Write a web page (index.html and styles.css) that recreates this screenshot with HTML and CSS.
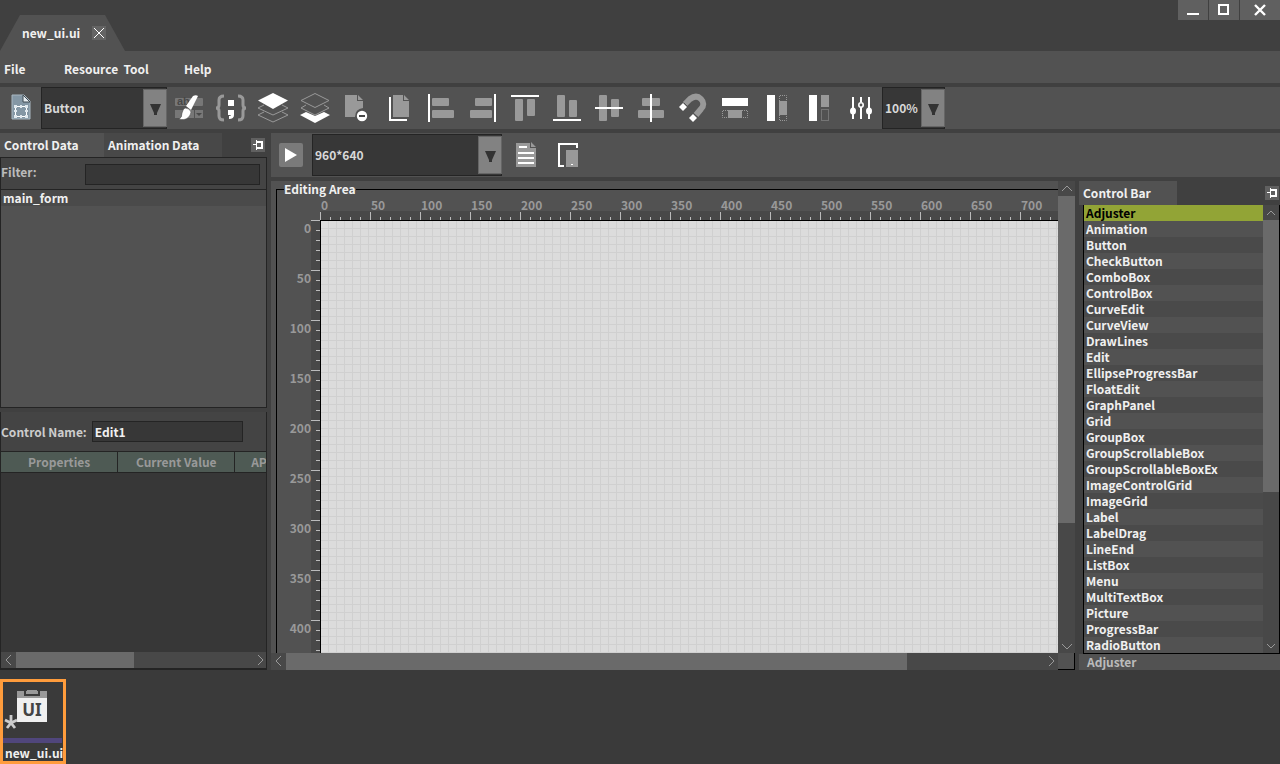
FILE: index.html
```html
<!DOCTYPE html>
<html lang="en">
<head>
<meta charset="utf-8">
<title>new_ui.ui</title>
<link rel="stylesheet" href="styles.css">
</head>
<body>
<div class="app">
<header class="titlebar">
  <div class="doc-tab"><span>new_ui.ui</span>
    <button class="tab-close" aria-label="Close tab"><svg width="14" height="14" viewBox="0 0 14 14"><path d="M2 2l10 10M12 2L2 12" stroke="#fff"/></svg></button>
  </div>
  <div class="window-buttons">
    <button aria-label="Minimize"><svg width="12" height="12" viewBox="0 0 12 12"><path d="M0 10h12" stroke="#fff" stroke-width="2"/></svg></button>
    <button aria-label="Maximize"><svg width="12" height="12" viewBox="0 0 12 12"><path d="M1 1h9v9H1z" fill="none" stroke="#fff" stroke-width="2"/></svg></button>
    <button class="wide" aria-label="Close"><svg width="12" height="12" viewBox="0 0 12 12"><path d="M1 1l10 10M11 1L1 11" stroke="#fff" stroke-width="2.4"/></svg></button>
  </div>
</header>
<nav class="menu"><button>File</button><button>Resource&nbsp; Tool</button><button>Help</button></nav>
<div class="toolbar">
  <button class="tool form-tool" aria-label="Form"><svg width="20" height="28" viewBox="0 0 20 28"><path d="M1 1h12l6 6v18H1z" fill="#8497a5" stroke="#a9b8c2"/><path d="M12 1l7 7h-7z" fill="#e8eef2" stroke="#3f4a52"/><path d="M4.500 12.500h11v10h-11z" fill="none" stroke="#fff"/><path d="M3 11h3v3H3zM14 11h3v3h-3zM3 21h3v3H3zM14 21h3v3h-3zM9 11h2v3H9zM9 21h2v3H9zM3 16h3v2H3zM14 16h3v2h-3z" fill="#dfe8ee"/></svg></button>
  <div class="combo combo-control"><select aria-label="Control type"><option>Button</option></select><span class="arrow"><svg width="11" height="13" viewBox="0 0 11 13"><path d="M0 1h11L7 10v2H4v-2z" fill="#333"/></svg></span></div>
  <button class="tool" aria-label="Style"><svg width="32" height="32" viewBox="0 0 32 32"><rect x="2" y="6" width="28" height="8" rx="1" fill="#777"/><text class="abc" x="4" y="13">ab</text><path d="M2 18h19v8H2zM22 18h8v8h-8z" fill="#777"/><path d="M23 21h6l-3 3z" fill="#484848"/><path d="M20 4q3-1.500 5 0l-7 14-5-4z" fill="#fff"/><path d="M12 16q5 0 6 4c-1 6-6 9-12 7q3-1 3-6 1-4 3-5z" fill="#fff" stroke="#525252" stroke-width=".6"/></svg></button>
  <button class="tool" aria-label="Code"><svg width="32" height="32" viewBox="0 0 32 32"><path d="M9 4Q4 4 4 8v5q0 3-3 3 3 0 3 3v5q0 4 5 4M23 4q5 0 5 4v5q0 3 3 3-3 0-3 3v5q0 4-5 4" fill="none" stroke="#999" stroke-width="3"/><path d="M13 8h6v6h-6zM13 18h6v5q0 4-5 4v-3q2 0 2-1h-3z" fill="#fff"/></svg></button>
  <button class="tool" aria-label="Bring to front"><svg width="32" height="32" viewBox="0 0 32 32"><path d="M7 13l-6 3 15 7 15-7-6-3M7 20l-6 3 15 7 15-7-6-3" fill="none" stroke="#999"/><path d="M16 1l15 7.500L16 17 1 8.500z" fill="#fff"/></svg></button>
  <button class="tool" aria-label="Send to back"><svg width="32" height="32" viewBox="0 0 32 32"><path d="M16 1.500l14 7-14 7-14-7zM7 13l-5 3 14 7 14-7-5-3" fill="none" stroke="#999"/><path d="M7 20l9 4 9-4 6 3-15 8-15-8z" fill="#fff"/></svg></button>
  <button class="tool" aria-label="Remove page"><svg width="32" height="32" viewBox="0 0 32 32"><path d="M4 3h12v6h6v7q-8 1-8 9H4zM17 3l5 5h-5z" fill="#999"/><circle cx="21" cy="24" r="5.200" fill="#fff"/><path d="M18 24h6" stroke="#484848" stroke-width="2"/></svg></button>
  <button class="tool" aria-label="Copy page"><svg width="32" height="32" viewBox="0 0 32 32"><path d="M10 3h10v6h6v16H10zM21 3l5 5h-5z" fill="#999"/><path d="M7 5v23h17" fill="none" stroke="#fff" stroke-width="2"/></svg></button>
  <button class="tool" aria-label="Align left"><svg width="32" height="32" viewBox="0 0 32 32"><rect x="7" y="6" width="17" height="8" rx="1" fill="#999"/><rect x="7" y="18" width="22" height="8" rx="1" fill="#999"/><path d="M4 2v28" stroke="#fff" stroke-width="2"/></svg></button>
  <button class="tool" aria-label="Align right"><svg width="32" height="32" viewBox="0 0 32 32"><rect x="8" y="6" width="17" height="8" rx="1" fill="#999"/><rect x="3" y="18" width="22" height="8" rx="1" fill="#999"/><path d="M28 2v28" stroke="#fff" stroke-width="2"/></svg></button>
  <button class="tool" aria-label="Align top"><svg width="32" height="32" viewBox="0 0 32 32"><rect x="6" y="7" width="8" height="22" rx="1" fill="#999"/><rect x="18" y="7" width="8" height="17" rx="1" fill="#999"/><path d="M2 4h28" stroke="#fff" stroke-width="2"/></svg></button>
  <button class="tool" aria-label="Align bottom"><svg width="32" height="32" viewBox="0 0 32 32"><rect x="6" y="3" width="8" height="22" rx="1" fill="#999"/><rect x="18" y="8" width="8" height="17" rx="1" fill="#999"/><path d="M2 28h28" stroke="#fff" stroke-width="2"/></svg></button>
  <button class="tool" aria-label="Align middle"><svg width="32" height="32" viewBox="0 0 32 32"><rect x="6" y="3" width="8" height="26" rx="1" fill="#999"/><rect x="18" y="7" width="8" height="18" rx="1" fill="#999"/><path d="M2 16h28" stroke="#fff" stroke-width="2"/></svg></button>
  <button class="tool" aria-label="Align center"><svg width="32" height="32" viewBox="0 0 32 32"><rect x="7" y="6" width="18" height="8" rx="1" fill="#999"/><rect x="3" y="18" width="26" height="8" rx="1" fill="#999"/><path d="M16 2v28" stroke="#fff" stroke-width="2"/></svg></button>
  <button class="tool" aria-label="Snap"><svg width="32" height="32" viewBox="0 0 32 32"><path d="M8 12l5-5c4-3 8-3 11 0s3 7 0 10l-5 6" fill="none" stroke="#999" stroke-width="6"/><path d="M7 11l5 5M15 22l6 4" stroke="#525252"/><path d="M2 15l4-4 4 4-4 4zM12 26l4-4 4 4-4 4z" fill="#fff"/></svg></button>
  <button class="tool" aria-label="Same width"><svg width="32" height="32" viewBox="0 0 32 32"><path d="M3 6h26v8H3z" fill="#fff"/><path d="M9 18h14v8H9z" fill="#999"/><path d="M9 18.500H3.500v7H9M23 18.500h5.500v7H23" fill="none" stroke="#999" stroke-dasharray="1 1"/></svg></button>
  <button class="tool" aria-label="Same height"><svg width="32" height="32" viewBox="0 0 32 32"><path d="M6 3h8v26H6z" fill="#fff"/><path d="M18 9h8v14h-8z" fill="#999"/><path d="M18.500 9V3.500h7V9M18.500 23v5.500h7V23" fill="none" stroke="#999" stroke-dasharray="1 1"/></svg></button>
  <button class="tool" aria-label="Same size"><svg width="32" height="32" viewBox="0 0 32 32"><path d="M6 3h8v26H6z" fill="#fff"/><path d="M18 3h8v12h-8z" fill="#999"/><path d="M18.500 17.500h7v11h-7z" fill="none" stroke="#999" stroke-dasharray="1 1"/></svg></button>
  <button class="tool" aria-label="Settings"><svg width="32" height="32" viewBox="0 0 32 32"><path d="M8 5v22M16 5v5M16 15v12M24 5v22" stroke="#fff" stroke-width="2"/><ellipse cx="8" cy="19" rx="3" ry="3.500" fill="#fff"/><circle cx="16" cy="13" r="2.200" fill="none" stroke="#fff" stroke-width="1.600"/><ellipse cx="24" cy="19" rx="3" ry="3.500" fill="#fff"/></svg></button>
  <div class="combo combo-zoom"><select aria-label="Zoom"><option>100%</option></select><span class="arrow"><svg width="11" height="13" viewBox="0 0 11 13"><path d="M0 1h11L7 10v2H4v-2z" fill="#333"/></svg></span></div>
</div>
<main class="main">
  <aside class="left">
    <div class="tabs"><button class="tab active">Control Data</button><button class="tab">Animation Data</button>
      <button class="pin" aria-label="Pin"><svg width="14" height="14" viewBox="0 0 14 14"><path d="M2 6h3v1H2zM5 2h1v10H5zM6 3h6v8H6v-2h4V5H6z" fill="#fff"/></svg></button></div>
    <section class="tree">
      <div class="filter"><label for="filter">Filter:</label><input id="filter"></div>
      <ul class="tree-list"><li>main_form</li></ul>
    </section>
    <section class="props">
      <div class="name-row"><label for="cname">Control Name:</label><input id="cname" value="Edit1"></div>
      <div class="table-clip"><table><thead><tr><th>Properties</th><th>Current Value</th><th class="last">AP</th></tr></thead></table></div>
      <div class="hscroll"><svg width="15" height="16" viewBox="0 0 15 16"><path d="M10 3L5 8l5 5" /></svg><div class="track"><div class="thumb left-thumb"></div></div><svg width="15" height="16" viewBox="0 0 15 16"><path d="M7 3l5 5-5 5"/></svg></div>
    </section>
  </aside>
  <div class="work">
    <div class="runbar">
      <button class="play" aria-label="Run"><svg width="24" height="24" viewBox="0 0 24 24"><path d="M6 5l12 7-12 7z" fill="#fff"/></svg></button>
      <div class="combo combo-size"><select aria-label="Resolution"><option>960*640</option></select><span class="arrow"><svg width="11" height="13" viewBox="0 0 11 13"><path d="M0 1h11L7 10v2H4v-2z" fill="#333"/></svg></span></div>
      <button class="tool" aria-label="Document"><svg width="32" height="32" viewBox="0 0 32 32"><path d="M6 4h14v5h6v19H6zM21 3l5 5h-5z" fill="#999"/><path d="M9 8h8M8 14h16M8 19h16M8 24h16" stroke="#fff" stroke-width="2"/></svg></button>
      <button class="tool" aria-label="Orientation"><svg width="32" height="32" viewBox="0 0 32 32"><path d="M12 27H7V5h18v4" fill="none" stroke="#fff" stroke-width="2"/><path d="M14 11h12v17H14z" fill="#999"/><path d="M19 25.500h2" stroke="#fff"/></svg></button>
    </div>
    <div class="panes">
      <section class="editor">
        <fieldset class="frame"><legend>Editing Area</legend>
          <div class="ruler-x"><span>0</span><span>50</span><span>100</span><span>150</span><span>200</span><span>250</span><span>300</span><span>350</span><span>400</span><span>450</span><span>500</span><span>550</span><span>600</span><span>650</span><span>700</span></div>
          <div class="ruler-y"><span>0</span><span>50</span><span>100</span><span>150</span><span>200</span><span>250</span><span>300</span><span>350</span><span>400</span></div>
          <div class="canvas"></div>
        </fieldset>
        <div class="vscroll"><svg width="17" height="15" viewBox="0 0 17 15"><path d="M4 10l5-5 5 5"/></svg><div class="track"><div class="thumb editor-v"></div></div><svg width="17" height="15" viewBox="0 0 17 15"><path d="M4 6l5 5 5-5"/></svg></div>
        <div class="hscroll"><svg width="15" height="16" viewBox="0 0 15 16"><path d="M10 3L5 8l5 5" /></svg><div class="track"><div class="thumb editor-h"></div></div><svg width="15" height="16" viewBox="0 0 15 16"><path d="M6 3l5 5-5 5"/></svg></div>
        <div class="corner"></div>
      </section>
      <aside class="right">
        <div class="tabs"><button class="tab active">Control Bar</button>
          <button class="pin" aria-label="Pin"><svg width="14" height="14" viewBox="0 0 14 14"><path d="M2 6h3v1H2zM5 2h1v10H5zM6 3h6v8H6v-2h4V5H6z" fill="#fff"/></svg></button></div>
        <div class="list-box">
          <ul class="controls"><li class="selected">Adjuster</li><li>Animation</li><li>Button</li><li>CheckButton</li><li>ComboBox</li><li>ControlBox</li><li>CurveEdit</li><li>CurveView</li><li>DrawLines</li><li>Edit</li><li>EllipseProgressBar</li><li>FloatEdit</li><li>GraphPanel</li><li>Grid</li><li>GroupBox</li><li>GroupScrollableBox</li><li>GroupScrollableBoxEx</li><li>ImageControlGrid</li><li>ImageGrid</li><li>Label</li><li>LabelDrag</li><li>LineEnd</li><li>ListBox</li><li>Menu</li><li>MultiTextBox</li><li>Picture</li><li>ProgressBar</li><li>RadioButton</li></ul>
          <div class="vscroll"><svg width="16" height="15" viewBox="0 0 16 15"><path d="M4 10l4-4 4 4"/></svg><div class="track"><div class="thumb list-v"></div></div><svg width="16" height="15" viewBox="0 0 16 15"><path d="M4 6l4 4 4-4"/></svg></div>
        </div>
        <div class="status">Adjuster</div>
      </aside>
    </div>
  </div>
</main>
<footer class="files">
  <button class="file"><svg width="58" height="56" viewBox="0 0 58 56"><path d="M14 9h30v9H14z" fill="#999"/><path d="M14 16h30v24H14z" fill="#f0f0f0"/><path d="M21 9h2v3h12V9h2v5H21z" fill="#3a3a3a"/><path d="M24 8h10v3H24z" fill="#999"/><text class="ui-mark" x="29" y="34">UI</text><path d="M8 33v8M2 38l6 3 6-3M4 46l4-5 4 5" fill="none" stroke="#ccc" stroke-width="2.800"/></svg><span class="bar"></span><span class="fname">new_ui.ui</span></button>
</footer>
</div>
</body>
</html>
```
FILE: styles.css
```css
* { box-sizing: border-box; }
body, ul, fieldset { margin: 0; padding: 0; }
body { background: #404040; }
body, button, input, select { font: 700 12px/16px "Noto Sans CJK SC", "Noto Sans", sans-serif; color: #f0f0f0; }
button { border: 0; padding: 0; background: none; }
svg { display: block; flex: none; }
ul { list-style: none; }
input, select { background: #373737; border: 1px solid #242424; border-radius: 0; color: #d8d8d8; outline: 0; }
.app { display: flex; flex-direction: column; height: 100vh; overflow: hidden; }

.titlebar { display: flex; justify-content: space-between; align-items: flex-end; height: 51px; flex: none; }
.doc-tab { display: flex; align-items: center; gap: 12px; height: 36px; width: 125px; padding-left: 22px; background: #525252; clip-path: polygon(20px 0, 105px 0, 100% 100%, 0 100%); }
.tab-close { background: #646464; }
.window-buttons { display: flex; gap: 1px; align-self: flex-start; }
.window-buttons button { display: grid; place-items: center; width: 30px; height: 20px; background: #606060; }
.window-buttons .wide { width: 40px; }

.menu { display: flex; align-items: center; height: 32px; padding: 4px 0 0 4px; background: #525252; flex: none; }
.menu button { min-width: 60px; text-align: left; }
.menu button:nth-child(2) { min-width: 120px; }

.toolbar { display: flex; align-items: center; height: 42px; margin: 4px 0; background: #525252; flex: none; }
.tool { display: grid; place-items: center; width: 42px; height: 42px; flex: none; }
.form-tool { width: 41px; }
.abc { font: 700 11px "Liberation Sans", sans-serif; fill: #484848; }
.combo { position: relative; flex: none; height: 42px; }
.combo select { appearance: none; width: 100%; height: 100%; padding: 0 24px 0 2px; }
.arrow { position: absolute; top: 2px; right: 0; bottom: 2px; width: 24px; display: grid; place-items: center; padding-top: 2px; background: #828282; border: 1px solid #666; pointer-events: none; }
.combo-control { width: 126px; margin-right: 1px; }
.combo-zoom { width: 63px; }

.main { display: flex; gap: 4px; flex: 1; min-height: 0; }
.left { display: flex; flex-direction: column; width: 267px; flex: none; }
.tabs { display: flex; height: 24px; flex: none; align-items: center; }
.tab { height: 24px; width: 118px; padding-left: 4px; text-align: left; background: #484848; }
.tab.active { width: 104px; background: #525252; }
.pin { margin-left: auto; background: #606060; }
.left .pin { margin-right: 2px; }
.right .pin { margin-right: 1px; }
.tree { display: flex; flex-direction: column; flex: none; height: 251px; border: 1px solid #242424; background: #525252; }
.filter { display: flex; justify-content: space-between; height: 32px; padding: 6px 6px 0 0; background: #444; border-bottom: 1px solid #242424; color: #bbb; }
.filter input { width: 175px; height: 21px; }
.tree-list li { height: 16px; padding-left: 2px; background: #4a4a4a; }
.props { display: flex; flex-direction: column; flex: 1; min-height: 0; margin-top: 4px; border: 1px solid #242424; border-top: 0; border-bottom-width: 2px; background: #373737; }
.name-row { display: flex; align-items: center; gap: 5px; height: 39px; background: #444; color: #ccc; }
.name-row input { width: 151px; height: 21px; padding: 0 2px; color: #f0f0f0; }
.table-clip { flex: 1; overflow: hidden; }
table { width: 351px; table-layout: fixed; border-collapse: collapse; }
th { height: 21px; padding: 0; border: 1px solid #242424; border-left: 0; background: #4e5a54; color: #999; }
.last { text-align: left; padding-left: 16px; }

.hscroll, .vscroll { display: flex; background: #484848; fill: none; stroke: #999; }
.vscroll { flex-direction: column; }
.track { flex: 1; }
.thumb { background: #6a6a6a; height: 100%; }
.left-thumb { width: 50%; }

.work { display: flex; flex-direction: column; flex: 1; min-width: 0; }
.runbar { display: flex; align-items: center; height: 44px; background: #525252; flex: none; }
.play { margin: 0 9px 0 8px; background: #7a7a7a; border-radius: 2px; }
.combo-size { width: 190px; margin-right: 3px; }
.panes { display: flex; gap: 4px; flex: 1; min-height: 0; margin-top: 4px; }
.editor { flex: 1; min-width: 0; display: grid; grid-template: minmax(0, 1fr) 17px / minmax(0, 1fr) 17px; background: #525252; }
.frame { display: grid; grid-template: 23px minmax(0, 1fr) / 43px minmax(0, 1fr); min-width: 0; margin-left: 5px; border: solid #000; border-width: 1px 0 0 1px; overflow: hidden; }
legend { padding: 0; margin-left: 7px; height: 16px; }
.ruler-x { grid-column: 2; display: flex; overflow: hidden; color: #999; background: repeating-linear-gradient(90deg, #bbb 0 1px, transparent 1px 50px) 0 100% / 100% 8px no-repeat, repeating-linear-gradient(90deg, #bbb 0 1px, transparent 1px 10px) 0 100% / 100% 3px no-repeat, linear-gradient(#484848, #484848) 0 100% / 100% 9px no-repeat; }
.ruler-x span { width: 50px; flex: none; padding-left: 1px; }
.ruler-y { overflow: hidden; color: #999; text-align: right; background: repeating-linear-gradient(#bbb 0 1px, transparent 1px 50px) 100% 0 / 9px 100% no-repeat, repeating-linear-gradient(#bbb 0 1px, transparent 1px 10px) 100% 0 / 4px 100% no-repeat, linear-gradient(#484848, #484848) 100% 0 / 9px 100% no-repeat; }
.ruler-y span { display: block; height: 50px; padding-right: 9px; }
.canvas { border: solid #000; border-width: 1px 0 0 1px; background: repeating-linear-gradient(90deg, transparent 0 7px, #d0d0d0 7px 8px), repeating-linear-gradient(#dcdcdc 0 7px, #d0d0d0 7px 8px); }
.editor-v { height: 74%; }
.editor-h { width: 82%; }
.corner { border: solid #000; border-width: 0 1px 1px 0; }

.right { display: flex; flex-direction: column; width: 201px; flex: none; }
.right .tab.active { width: 98px; }
.list-box { display: flex; flex: 1; min-height: 0; margin-left: 4px; border: 1px solid #000; border-top: 0; background: #525252; }
.controls { flex: 1; overflow: hidden; }
.controls li { height: 16px; padding-left: 2px; }
.controls li:nth-child(odd) { background: #4a4a4a; }
.controls .selected:nth-child(odd) { background: #92a436; color: #000; }
.list-v { height: 65%; }
.status { height: 16px; padding-left: 8px; background: #525252; color: #bbb; }

.files { height: 94px; padding-top: 9px; flex: none; background: #3a3a3a; }
.file { display: flex; flex-direction: column; width: 66px; height: 85px; border: 3px solid #ff9c3c; }
.bar { width: 59px; height: 5px; background: #50467c; }
.fname { padding: 2px 0 0 2px; }
.ui-mark { font: 700 17px "Noto Sans", sans-serif; fill: #444; text-anchor: middle; }
```
